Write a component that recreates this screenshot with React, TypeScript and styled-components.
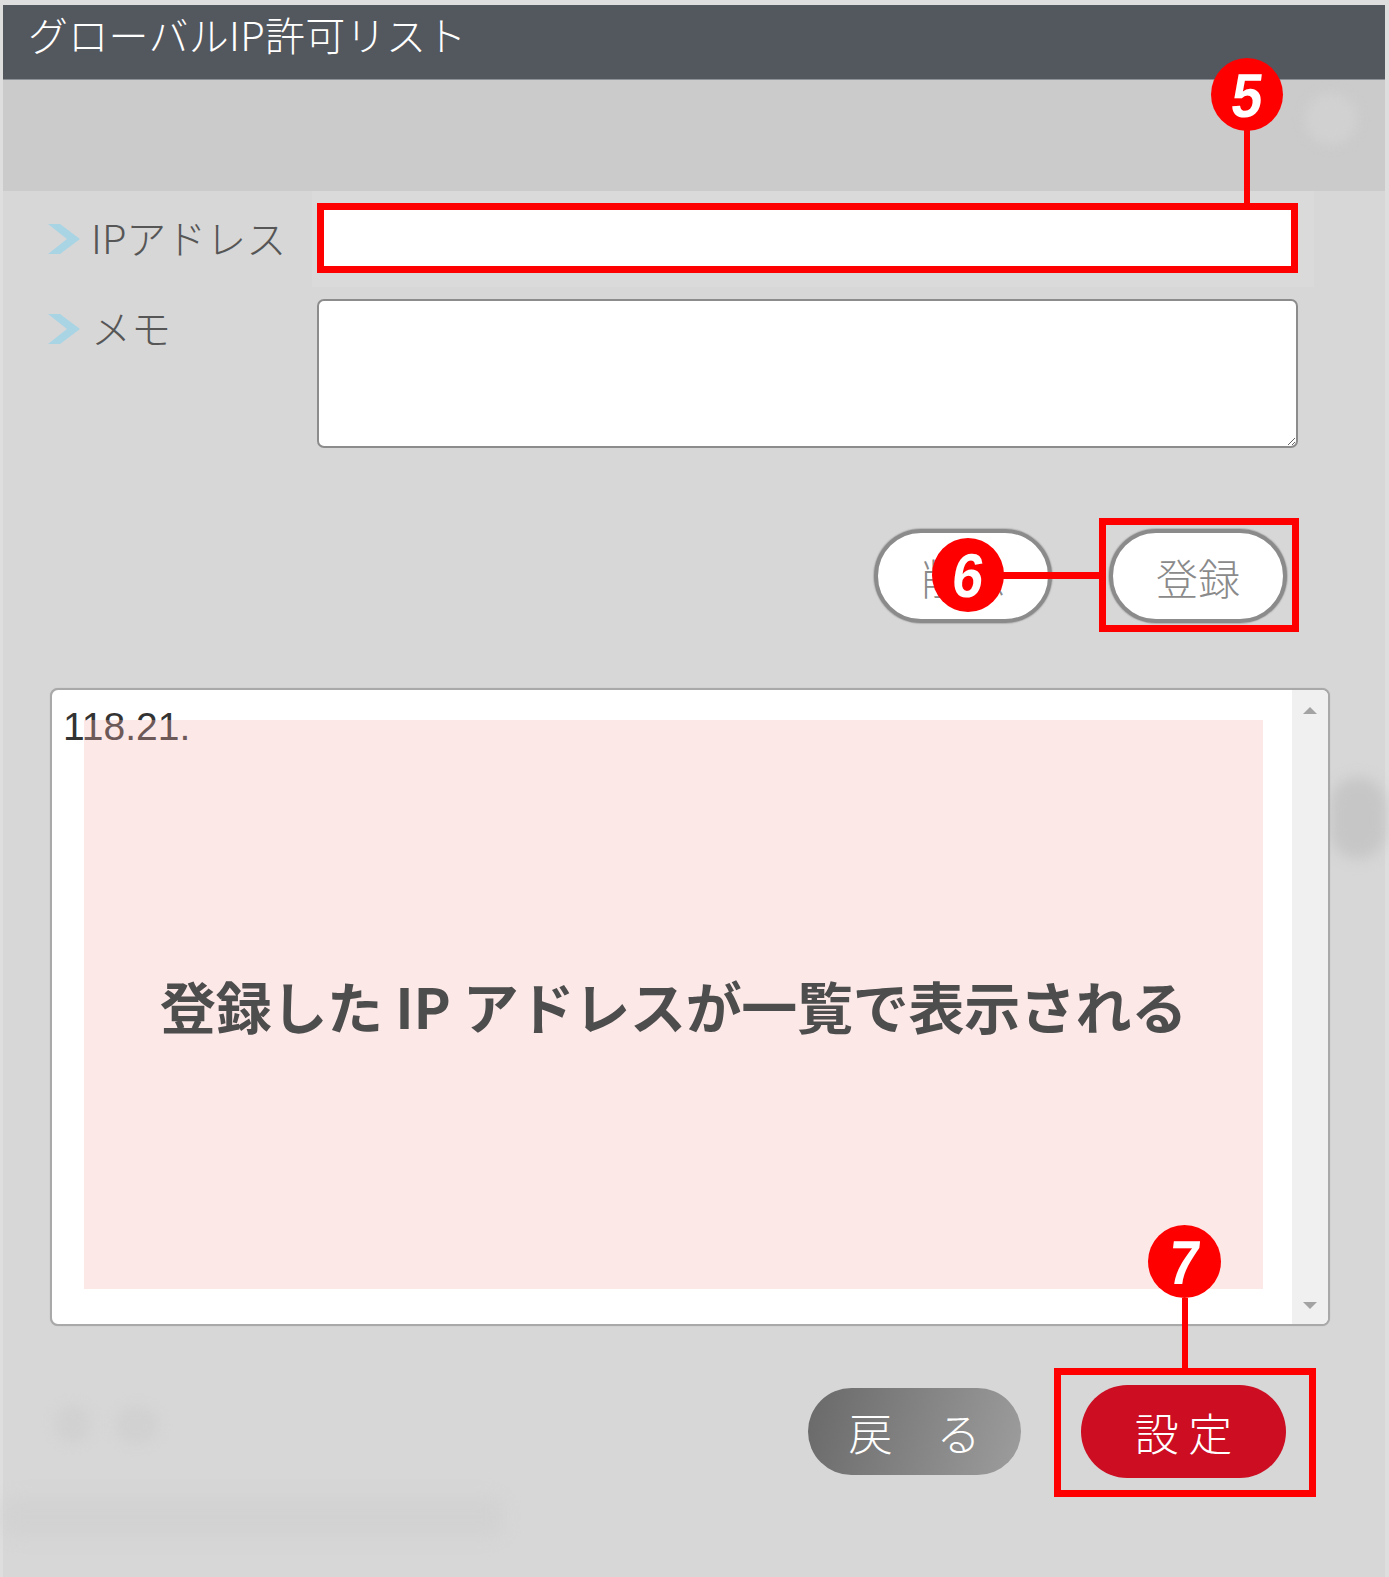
import React from "react";
import styled, { createGlobalStyle } from "styled-components";

const GlobalStyle = createGlobalStyle`
  html, body {
    margin: 0;
    padding: 0;
    background: #dedede;
  }
  body {
    font-family: "Noto Sans CJK JP", "Noto Sans", sans-serif;
  }
  * { box-sizing: border-box; }
`;

const Page = styled.div`
  position: relative;
  width: 1389px;
  height: 1577px;
  overflow: hidden;
  padding: 5px 4px 0 3px;
`;

const Dialog = styled.div`
  position: relative;
  height: 1572px;
  background: #d7d7d7;
  display: flex;
  flex-direction: column;
`;

const Ghost = styled.div<{ $x: number; $y: number; $w: number; $h: number; $c: string; $r?: number; $b?: number }>`
  position: absolute;
  left: ${(p) => p.$x}px;
  top: ${(p) => p.$y}px;
  width: ${(p) => p.$w}px;
  height: ${(p) => p.$h}px;
  background: ${(p) => p.$c};
  border-radius: ${(p) => p.$r ?? 999}px;
  filter: blur(${(p) => p.$b ?? 8}px);
  pointer-events: none;
`;

const Header = styled.div`
  height: 75px;
  background: #53575e;
  border-bottom: 1px solid #8d9095;
  padding: 3px 0 0 25px;
`;

const Title = styled.h1`
  margin: 0;
  font-family: "Noto Sans CJK JP", sans-serif;
  font-weight: 300;
  font-size: 40px;
  line-height: 52px;
  color: #ffffff;
  letter-spacing: 0.3px;
`;

const TopBand = styled.div`
  height: 111px;
  background: #cbcbcb;
`;

const FormGrid = styled.div`
  display: grid;
  grid-template-columns: 309px 1002px;
  row-gap: 12px;
`;

const LabelCell = styled.div<{ $top?: number }>`
  display: flex;
  align-items: flex-start;
  padding: ${(p) => p.$top ?? 0}px 0 0 45px;
  gap: 11px;
  font-size: 40px;
  line-height: 50px;
  font-weight: 300;
  color: #565656;
  letter-spacing: 0;
`;

const Chevron = styled.svg`
  flex: none;
  width: 32px;
  height: 32px;
  margin-top: 11px;
`;

const FieldPanel = styled.div<{ $shade?: boolean }>`
  background: ${(p) => (p.$shade ? "#dadada" : "transparent")};
  padding: ${(p) => (p.$shade ? "12px 16px 14px 5px" : "0 16px 0 5px")};
`;

const Anchor = styled.div`
  position: relative;
`;

const TextInput = styled.input`
  display: block;
  width: 981px;
  height: 70px;
  border: 1px solid #c8c8c8;
  border-left: 3px solid #bdbdbd;
  background: #fff;
  outline: none;
`;

const MemoArea = styled.textarea`
  display: block;
  width: 981px;
  height: 149px;
  border: 2px solid #8c8c8c;
  border-radius: 7px;
  background: #fff;
  outline: none;
`;

const RedFrame = styled.div<{ $t: number; $l: number; $r: number; $b: number }>`
  position: absolute;
  top: ${(p) => p.$t}px;
  left: ${(p) => p.$l}px;
  right: ${(p) => p.$r}px;
  bottom: ${(p) => p.$b}px;
  border: 7px solid #ff0000;
  pointer-events: none;
`;

const Bubble = styled.div<{ $x: number; $y: number; $w?: number; $h?: number }>`
  position: absolute;
  left: ${(p) => p.$x}px;
  top: ${(p) => p.$y}px;
  width: ${(p) => p.$w ?? 72}px;
  height: ${(p) => p.$h ?? 73}px;
  border-radius: 50%;
  background: #ff0000;
  color: #fff;
  display: flex;
  align-items: center;
  justify-content: center;
  font-family: "Liberation Sans", Arial, sans-serif;
  font-weight: 700;
  font-size: 62px;
  line-height: 1;
  z-index: 3;
  span {
    display: block;
    transform: skewX(-7deg) scaleX(0.9);
    margin-top: 2px;
  }
`;

const Stem = styled.div<{ $x: number; $y: number; $w: number; $h: number }>`
  position: absolute;
  left: ${(p) => p.$x}px;
  top: ${(p) => p.$y}px;
  width: ${(p) => p.$w}px;
  height: ${(p) => p.$h}px;
  background: #ff0000;
  z-index: 2;
`;

const ActionRow = styled.div<{ $top: number; $right: number; $gap: number }>`
  display: flex;
  justify-content: flex-end;
  align-items: center;
  margin-top: ${(p) => p.$top}px;
  padding-right: ${(p) => p.$right}px;
  gap: ${(p) => p.$gap}px;
`;

const PillButton = styled.button`
  width: 178px;
  height: 94px;
  border-radius: 47px;
  background: #ffffff;
  border: 4px solid #8b8b8b;
  box-shadow: 0 0 1px 1px rgba(120, 120, 120, 0.35);
  font-family: "Noto Sans CJK JP", sans-serif;
  font-size: 42px;
  font-weight: 300;
  color: #8a8a8a;
  padding: 0;
  cursor: pointer;
`;

const BackButton = styled.button`
  width: 213px;
  height: 87px;
  border-radius: 44px;
  border: none;
  background: linear-gradient(105deg, #696969 0%, #838383 50%, #9d9d9d 100%);
  color: #fff;
  font-family: "Noto Sans CJK JP", sans-serif;
  font-size: 44px;
  font-weight: 300;
  padding: 0;
  cursor: pointer;
`;

const SubmitButton = styled.button`
  width: 205px;
  height: 93px;
  border-radius: 47px;
  border: none;
  background: #cc0d22;
  color: #fff;
  font-family: "Noto Sans CJK JP", sans-serif;
  font-size: 44px;
  font-weight: 300;
  padding: 0;
  cursor: pointer;
`;

const ListBox = styled.div`
  position: relative;
  margin: 65px 0 0 47px;
  width: 1280px;
  height: 638px;
  background: #fff;
  border: 2px solid #a9a9a9;
  border-radius: 8px;
  box-shadow: 0 0 1px rgba(0, 0, 0, 0.2);
  display: flex;
`;

const ListContent = styled.div`
  flex: 1;
  padding: 15px 0 0 11px;
  font-family: "Liberation Sans", Arial, sans-serif;
  font-size: 39px;
  color: #333;
  line-height: 44px;
`;

const ScrollTrack = styled.div`
  width: 36px;
  background: #f0f0f0;
  display: flex;
  flex-direction: column;
  justify-content: space-between;
  align-items: center;
  padding: 17px 0 15px;
  border-radius: 0 6px 6px 0;
`;

const Arrow = styled.div<{ $down?: boolean }>`
  width: 0;
  height: 0;
  border-left: 7px solid transparent;
  border-right: 7px solid transparent;
  ${(p) => (p.$down ? "border-top: 7px solid #a3a3a3;" : "border-bottom: 7px solid #a3a3a3;")}
`;

const NoteOverlay = styled.div`
  position: absolute;
  left: 32px;
  top: 30px;
  width: 1179px;
  height: 569px;
  background: rgba(248, 180, 180, 0.3);
  display: flex;
  align-items: center;
  justify-content: center;
  font-family: "Noto Sans CJK JP", sans-serif;
  font-weight: 700;
  font-size: 56px;
  color: #4d4d4d;
  letter-spacing: -0.3px;
`;

function ChevronIcon() {
  return (
    <Chevron viewBox="0 0 32 32">
      <polygon points="0,1 12,1 32,16 12,31 0,31 19,16" fill="#a9d4e4" />
    </Chevron>
  );
}

export default function App() {
  return (
    <>
      <GlobalStyle />
      <Page>
        <Dialog>
          <Ghost $x={1302} $y={88} $w={52} $h={52} $c="#d1d1d1" $b={6} />
          <Ghost $x={1327} $y={772} $w={56} $h={82} $c="#c6c6c6" $b={7} />
          <Ghost $x={52} $y={1400} $w={36} $h={38} $c="#d1d1d1" $b={6} />
          <Ghost $x={112} $y={1402} $w={44} $h={36} $c="#d1d1d1" $b={6} />
          <Ghost $x={0} $y={1492} $w={500} $h={40} $c="#d2d2d2" $r={12} $b={8} />
          <Header>
            <Title>グローバルIP許可リスト</Title>
          </Header>
          <TopBand />
          <FormGrid>
            <LabelCell $top={21}>
              <ChevronIcon />
              <span>IPアドレス</span>
            </LabelCell>
            <FieldPanel $shade>
              <Anchor>
                <TextInput type="text" />
                <RedFrame $t={0} $l={0} $r={0} $b={0} />
                <Stem $x={927} $y={-73} $w={6} $h={73} />
                <Bubble $x={894} $y={-145}>
                  <span>5</span>
                </Bubble>
              </Anchor>
            </FieldPanel>
            <LabelCell $top={3}>
              <ChevronIcon />
              <span>メモ</span>
            </LabelCell>
            <FieldPanel>
              <MemoArea />
            </FieldPanel>
          </FormGrid>

          <ActionRow $top={81} $right={98} $gap={57}>
            <PillButton>削除</PillButton>
            <Anchor>
              <PillButton>登録</PillButton>
              <RedFrame $t={-11} $l={-10} $r={-12} $b={-9} />
              <Stem $x={-108} $y={43} $w={98} $h={7} />
              <Bubble $x={-177} $y={9} $w={72} $h={74}>
                <span>6</span>
              </Bubble>
            </Anchor>
          </ActionRow>

          <ListBox>
            <ListContent>118.21.</ListContent>
            <ScrollTrack>
              <Arrow />
              <Arrow $down />
            </ScrollTrack>
            <NoteOverlay>登録した IP アドレスが一覧で表示される</NoteOverlay>
          </ListBox>

          <ActionRow $top={59} $right={99} $gap={60}>
            <BackButton>戻　る</BackButton>
            <Anchor>
              <SubmitButton>設 定</SubmitButton>
              <RedFrame $t={-17} $l={-27} $r={-30} $b={-19} />
              <Stem $x={101} $y={-87} $w={6} $h={70} />
              <Bubble $x={67} $y={-160} $w={73} $h={73}>
                <span>7</span>
              </Bubble>
            </Anchor>
          </ActionRow>
        </Dialog>
      </Page>
    </>
  );
}
